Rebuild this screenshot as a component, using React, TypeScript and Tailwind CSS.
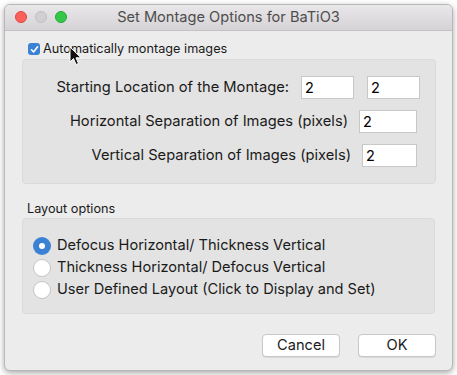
import React from "react";

function Cursor() {
  return (
    <svg className="absolute left-[69px] top-[46px]" width="13" height="20" viewBox="0 0 13 20">
      <path d="M1 1 L1 16 L4.5 12.5 L7 18.5 L9.5 17.5 L7 11.8 L12 11.8 Z" fill="#111" stroke="#fff" strokeWidth="1" strokeLinejoin="round" />
    </svg>
  );
}

function Field({ w }: { w: string }) {
  return (
    <div className={`${w} h-[23px] bg-white border border-[#c8c8c8] flex items-center pl-[3px] text-[14.5px] text-black`}>2</div>
  );
}

function Radio({ checked, label }: { checked?: boolean; label: string }) {
  return (
    <div className="flex items-center h-[22px]">
      {checked ? (
        <div className="w-[18px] h-[18px] rounded-full bg-[#3b82d4] flex items-center justify-center">
          <div className="w-[6px] h-[6px] rounded-full bg-white" />
        </div>
      ) : (
        <div className="w-[18px] h-[18px] rounded-full bg-white border border-[#c4c4c4]" />
      )}
      <span className="ml-[6px] text-[14.6px] text-[#1a1a1a]">{label}</span>
    </div>
  );
}

export default function App() {
  return (
    <div className="w-[457px] h-[375px] bg-white relative overflow-hidden" style={{ fontFamily: 'Inter, "Liberation Sans", Arial, sans-serif' }}>
      <div className="absolute left-[4px] top-[4px] w-[449px] h-[367px] rounded-[6px] bg-[#ececec] border border-[#b8b8b8] shadow-[0_2px_6px_rgba(0,0,0,0.35)] flex flex-col overflow-hidden">
        <div className="h-[26px] bg-gradient-to-b from-[#e9e7e9] to-[#d5d3d5] border-b border-[#c4c2c4] relative flex items-center justify-center">
          <div className="absolute left-[10px] top-[6px] flex gap-[8px]">
            <div className="w-[12px] h-[12px] rounded-full bg-[#fc605b] border border-[#e2463f]" />
            <div className="w-[12px] h-[12px] rounded-full bg-[#d0d0d0] border border-[#c0c0c0]" />
            <div className="w-[12px] h-[12px] rounded-full bg-[#34c84a] border border-[#24a93a]" />
          </div>
          <span className="text-[14.6px] text-[#4d4d4d]">Set Montage Options for BaTiO3</span>
        </div>
        <div className="flex flex-col pl-[17px] pr-[16px] pt-[11px]">
          <div className="flex items-center h-[14px] ml-[6px]">
            <div className="w-[12px] h-[12px] rounded-[3px] bg-[#3b82d4] flex items-center justify-center">
              <svg width="9" height="9" viewBox="0 0 9 9"><path d="M1.5 4.8 L3.6 7 L7.6 1.8" fill="none" stroke="#fff" strokeWidth="1.6" strokeLinecap="round" strokeLinejoin="round" /></svg>
            </div>
            <span className="ml-[3px] text-[12.7px] text-[#1a1a1a]">Automatically montage images</span>
          </div>
          <div className="mt-[3px] h-[125px] w-[414px] bg-[#e3e3e3] border border-[#dadada] rounded-[4px] flex flex-col pt-[16px] text-[14.7px] text-[#1a1a1a]">
            <div className="flex items-center h-[23px]">
              <span className="w-[266px] text-right whitespace-nowrap">Starting Location of the Montage:</span>
              <div className="ml-[12px]"><Field w="w-[53px]" /></div>
              <div className="ml-[13px]"><Field w="w-[53px]" /></div>
            </div>
            <div className="flex items-center h-[23px] mt-[11px]">
              <span className="w-[325px] text-right whitespace-nowrap">Horizontal Separation of Images (pixels)</span>
              <div className="ml-[11px]"><Field w="w-[58px]" /></div>
            </div>
            <div className="flex items-center h-[23px] mt-[11px]">
              <span className="w-[328px] text-right whitespace-nowrap">Vertical Separation of Images (pixels)</span>
              <div className="ml-[11px]"><Field w="w-[55px]" /></div>
            </div>
          </div>
          <div className="mt-[17px] ml-[5px] text-[12.7px] text-[#1a1a1a] h-[16px] leading-[16px]">Layout options</div>
          <div className="mt-[1px] h-[96px] w-[413px] bg-[#e3e3e3] border border-[#dadada] rounded-[4px] flex flex-col pt-[16px] pl-[10px]">
            <Radio checked label="Defocus Horizontal/ Thickness Vertical" />
            <Radio label="Thickness Horizontal/ Defocus Vertical" />
            <Radio label="User Defined Layout (Click to Display and Set)" />
          </div>
          <div className="flex justify-end gap-[18px] mt-[20px]">
            <button className="w-[78px] h-[23px] bg-white border border-[#c8c8c8] rounded-[4px] text-[14.6px] text-[#1a1a1a] shadow-[0_1px_0_rgba(0,0,0,0.08)]">Cancel</button>
            <button className="w-[78px] h-[23px] bg-white border border-[#c8c8c8] rounded-[4px] text-[14.6px] text-[#1a1a1a] shadow-[0_1px_0_rgba(0,0,0,0.08)]">OK</button>
          </div>
        </div>
      </div>
      <Cursor />
    </div>
  );
}
